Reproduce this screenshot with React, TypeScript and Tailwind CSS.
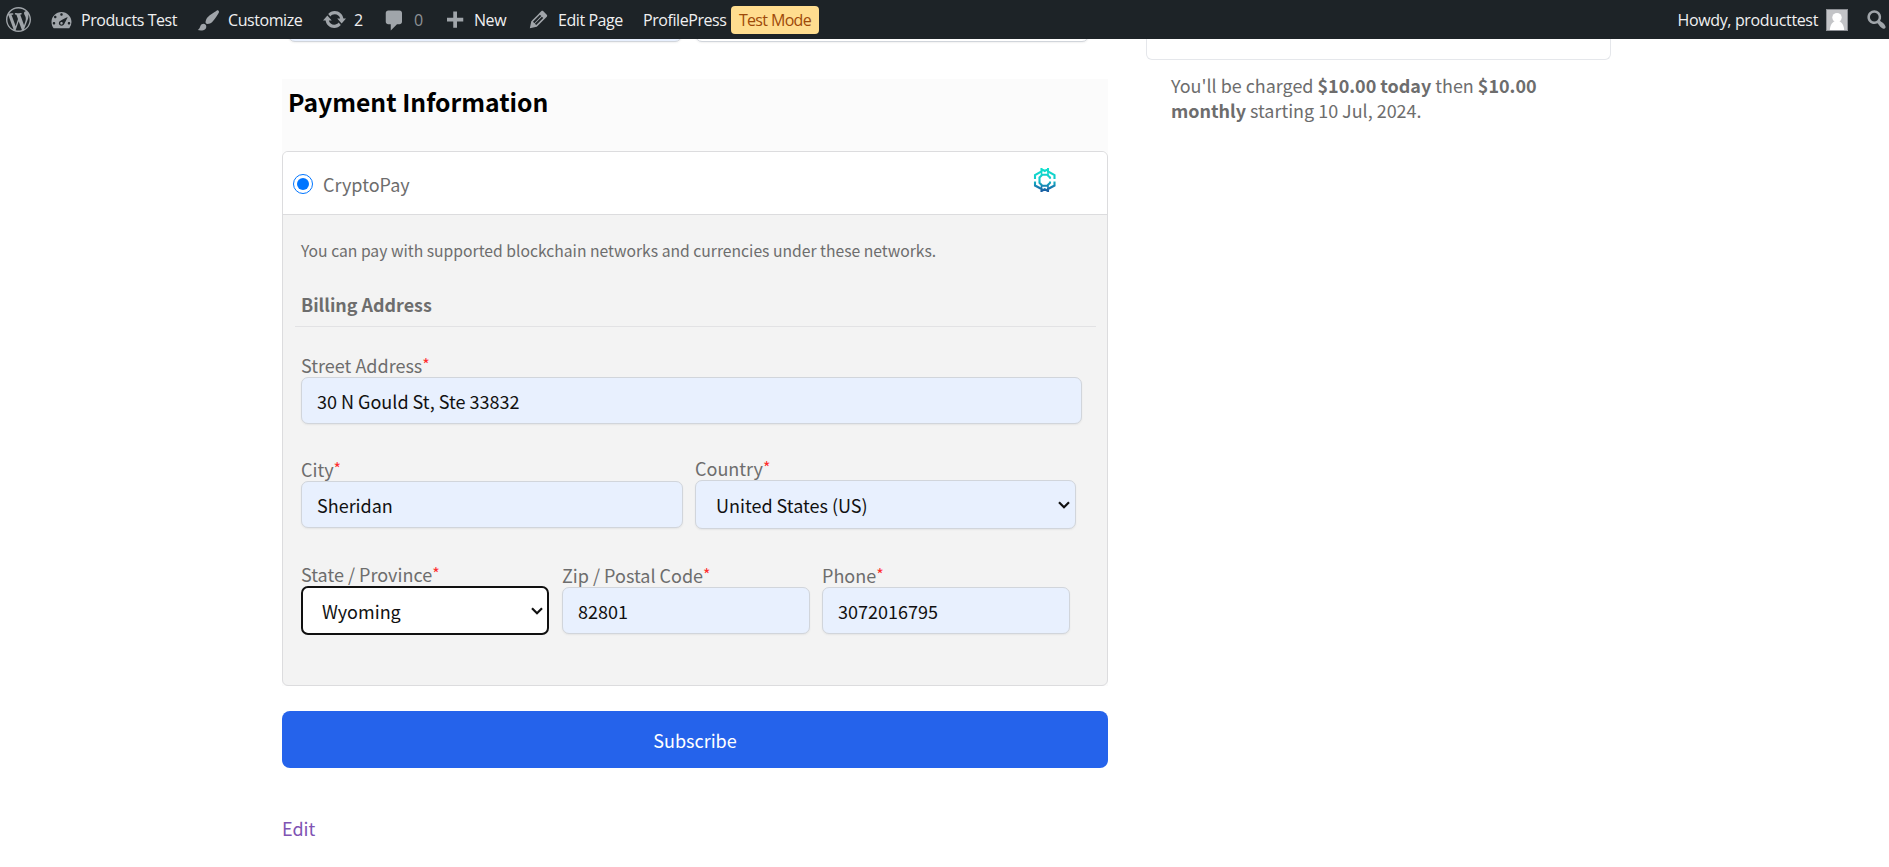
import React from "react";

const icons = {
  wordpress:
    "M20 10c0-5.51-4.49-10-10-10C4.48 0 0 4.49 0 10c0 5.52 4.48 10 10 10 5.51 0 10-4.48 10-10zM7.78 15.37L4.37 6.22c.55-.02 1.17-.08 1.17-.08.5-.06.44-1.13-.06-1.11 0 0-1.45.11-2.37.11-.18 0-.37 0-.58-.01C4.12 2.69 6.87 1.11 10 1.11c2.33 0 4.45.87 6.05 2.34-.68-.11-1.65.39-1.65 1.58 0 .74.45 1.36.9 2.1.35.61.55 1.36.55 2.46 0 1.49-1.4 5-1.4 5l-3.03-8.37c.54-.02.82-.17.82-.17.5-.05.44-1.25-.06-1.22 0 0-1.44.12-2.38.12-.87 0-2.33-.12-2.33-.12-.5-.03-.56 1.2-.06 1.22l.92.08 1.26 3.41zM17.41 10c.24-.64.74-1.87.43-4.25.7 1.29 1.05 2.71 1.05 4.25 0 3.29-1.73 6.24-4.4 7.78.97-2.59 1.94-5.2 2.92-7.78zM6.1 18.09C3.12 16.65 1.11 13.53 1.11 10c0-1.3.23-2.48.72-3.59C3.25 10.3 4.67 14.2 6.1 18.09zm4.03-6.63l2.58 6.98c-.86.29-1.76.45-2.71.45-.79 0-1.57-.11-2.29-.33.81-2.38 1.62-4.74 2.42-7.1z",
  dashboard:
    "M3.76 17h12.48A7.98 7.98 0 0 0 18 12c0-4.41-3.58-8-8-8s-8 3.59-8 8c0 1.9.66 3.64 1.76 5zM9 6c0-.55.45-1 1-1s1 .45 1 1c0 .56-.45 1-1 1s-1-.44-1-1zM4 8c0-.55.45-1 1-1s1 .45 1 1c0 .56-.45 1-1 1s-1-.44-1-1zm4.52 3.4c.84-.83 6.51-3.5 6.51-3.5s-2.66 5.68-3.49 6.51c-.84.84-2.18.84-3.02 0-.83-.83-.83-2.18 0-3.01zM3 13c0-.55.45-1 1-1s1 .45 1 1c0 .56-.45 1-1 1s-1-.44-1-1zm6 0c0 .55.45 1 1 1 .55 0 1-.45 1-1 0-.56-.45-1-1-1-.55 0-1 .44-1 1zm6 0c0-.55.45-1 1-1s1 .45 1 1c0 .56-.45 1-1 1s-1-.44-1-1z",
  brush:
    "M18.33 3.57s.27-.8-.31-1.36c-.53-.52-1.22-.24-1.22-.24-.61.3-5.76 3.47-7.67 5.57-.86.96-2.06 3.79-1.09 4.82.92.98 3.96-.17 4.79-1 2.06-2.06 5.21-7.17 5.5-7.79zM1.4 17.65c2.37-1.56 1.46-3.41 3.23-4.64.93-.65 2.22-.62 3.08.29.63.67.8 2.57-.16 3.46-1.57 1.45-4 1.55-6.15.89z",
  update:
    "M10.2 3.28c3.53 0 6.43 2.61 6.92 6h2.08l-3.5 4-3.5-4h2.32c-.45-1.97-2.21-3.45-4.32-3.45-1.45 0-2.73.71-3.54 1.78L4.95 5.66C6.23 4.2 8.11 3.28 10.2 3.28zm-.4 13.44c-3.52 0-6.43-2.61-6.92-6H.8l3.5-4c1.17 1.33 2.33 2.67 3.5 4H5.48c.45 1.97 2.21 3.45 4.32 3.45 1.45 0 2.73-.71 3.54-1.78l1.71 1.95c-1.28 1.46-3.15 2.38-5.25 2.38z",
  comment:
    "M5 2h9c1.1 0 2 .9 2 2v7c0 1.1-.9 2-2 2h-2l-5 5v-5H5c-1.1 0-2-.9-2-2V4c0-1.1.9-2 2-2z",
  plus: "M17 7v3h-5v5H9v-5H4V7h5V2h3v5h5z",
  pencil:
    "M13.89 3.39l2.71 2.72c.46.46.42 1.24.03 1.64l-8.01 8.02-5.56 1.16 1.16-5.58s7.6-7.63 7.99-8.03c.39-.39 1.22-.39 1.68.07zm-2.73 2.79l-5.59 5.61 1.11 1.11 5.54-5.65zm-2.97 8.23l5.58-5.6-1.07-1.08-5.59 5.6z",
  search:
    "M12.14 4.18c1.87 1.87 2.11 4.75.72 6.89.12.1.22.21.36.31.2.16.47.36.81.59.34.24.56.39.66.47.42.31.73.57.94.78.32.32.6.65.84 1 .25.35.44.69.59 1.04.14.35.21.68.18 1-.02.32-.14.59-.36.81s-.49.34-.81.36c-.31.02-.65-.04-.99-.19-.35-.14-.7-.34-1.04-.59-.35-.24-.68-.52-1-.84-.21-.21-.47-.52-.77-.93-.1-.13-.25-.35-.47-.66-.22-.32-.4-.57-.56-.78-.16-.2-.29-.35-.44-.5-2.07 1.09-4.69.76-6.44-.98-2.14-2.15-2.14-5.64 0-7.78 2.15-2.15 5.63-2.15 7.78 0zm-1.41 6.36c1.36-1.37 1.36-3.58 0-4.95-1.37-1.37-3.59-1.37-4.95 0-1.37 1.37-1.37 3.58 0 4.95 1.36 1.37 3.58 1.37 4.95 0z",
};

function Icon({ name, className = "" }: { name: keyof typeof icons; className?: string }) {
  return (
    <svg viewBox="0 0 20 20" className={`size-[25px] shrink-0 fill-[#a0a5aa] ${className}`}>
      <path fillRule="evenodd" d={icons[name]} />
    </svg>
  );
}

function AdminBar() {
  return (
    <header className="flex h-[39px] items-center overflow-hidden bg-[#1d2327] font-['Open_Sans',sans-serif] text-[16px] leading-[39px] tracking-[-0.43px] whitespace-nowrap text-[#f0f0f1]">
      <a className="flex w-[49px] items-center pl-[6px]">
        <Icon name="wordpress" />
      </a>
      <a className="flex w-[147px] items-center gap-[7px]">
        <Icon name="dashboard" className="-mt-px" />
        <span className="pt-px">Products Test</span>
      </a>
      <a className="flex w-[126px] items-center gap-[7px]">
        <Icon name="brush" className="mt-px" />
        <span className="pt-px">Customize</span>
      </a>
      <a className="flex w-[60px] items-center gap-[7px]">
        <Icon name="update" />
        <span className="pt-px">2</span>
      </a>
      <a className="flex w-[60px] items-center gap-[7px]">
        <Icon name="comment" className="mt-px" />
        <span className="pt-px text-[#8d9195]">0</span>
      </a>
      <a className="flex w-[84px] items-center gap-[7px]">
        <Icon name="plus" className="mt-[3px]" />
        <span className="pt-px">New</span>
      </a>
      <a className="flex w-[117px] items-center gap-[7px]">
        <Icon name="pencil" />
        <span className="pt-px">Edit Page</span>
      </a>
      <a className="flex items-center">
        <span className="w-[88px] pt-px">ProfilePress</span>
        <span className="flex h-7 w-[88px] items-center justify-center rounded-[4px] bg-[#ffdd8f] pt-px tracking-[-0.65px] text-[#9e4a09]">
          Test Mode
        </span>
      </a>
      <a className="ml-auto flex items-center gap-2">
        <span className="pt-px tracking-[-0.35px]">Howdy, producttest</span>
        <svg viewBox="0 0 22 22" className="size-[22px]">
          <rect width="22" height="22" fill="#8c8f94" />
          <rect x="1" y="1" width="20" height="20" fill="#c3c4c7" />
          <circle cx="11" cy="8.6" r="4.7" fill="#fff" />
          <path d="M3.8 21c.3-5 2.6-8.300 5.200-8.800h4c2.600.5 4.900 3.800 5.200 8.800z" fill="#fff" />
        </svg>
      </a>
      <Icon name="search" className="ml-[16px]" />
    </header>
  );
}

function CryptoLogo() {
  return (
    <svg viewBox="0 0 24 26" className="h-[26px] w-[24px]" fill="none" strokeWidth="2.1">
      <defs>
        <linearGradient id="crypto" x1="0" y1="0" x2="0" y2="26" gradientUnits="userSpaceOnUse">
          <stop offset="0" stopColor="#0fe3cb" />
          <stop offset="0.5" stopColor="#12c8cc" />
          <stop offset="0.72" stopColor="#1688b4" />
          <stop offset="1" stopColor="#1a4f9c" />
        </linearGradient>
      </defs>
      <g stroke="url(#crypto)">
        <path d="M2 12V8L8.500 4.300V1M21.500 12V8L15 4.300V1M8.500 2.200L11.750 4 15 2.200" />
        <path d="M2 14.500v4L8.500 22v3M21.500 14.500v4L15 22v3M8.500 24L11.750 22.300 15 24" />
        <path d="M17 11.800V10.500L14.200 7.700H9.300L6.500 10.500v5.300L9.300 18.700h4.900L17 15.800v-1.200" />
        <path d="M8.500 4.500v3.500M15 4.500v3.500M8.500 18.500v3.500M15 18.500v3.500" strokeWidth="1.600" />
      </g>
    </svg>
  );
}

function Label({ children }: { children: React.ReactNode }) {
  return (
    <label className="block h-[24px] text-[18px] leading-[24px] whitespace-nowrap text-[#6d6d6d]">
      {children}
      <span className="relative -top-[2px] text-[16px] leading-none text-[#ff2d2d]">*</span>
    </label>
  );
}

function TextField({ label, value, className }: { label: string; value: string; className: string }) {
  return (
    <div className={className}>
      <Label>{label}</Label>
      <div className="flex h-[47px] items-center rounded-[7px] border border-[#d1d5db] bg-[#e8f0fe] px-[15px] text-[18px] leading-none text-[#111] shadow-[0_1px_2px_rgba(0,0,0,0.06)]">
        {value}
      </div>
    </div>
  );
}

function SelectField({
  label,
  value,
  className,
  box,
}: {
  label: string;
  value: string;
  className: string;
  box: string;
}) {
  return (
    <div className={className}>
      <Label>{label}</Label>
      <div
        className={`flex h-[49px] items-center justify-between rounded-[7px] text-[18px] leading-none text-[#111] ${box}`}
      >
        {value}
        <svg viewBox="0 0 12 8" className="h-2 w-3" fill="none" stroke="#111" strokeWidth="2.2">
          <path d="M1 1.200l5 5 5-5" />
        </svg>
      </div>
    </div>
  );
}

export default function App() {
  return (
    <div className="h-[867px] overflow-hidden bg-white font-['Noto_Sans_CJK_SC',sans-serif] text-[18px] text-[#6d6d6d]">
      <AdminBar />
      <div className="flex items-start pl-[282px]">
        <main className="w-[826px]">
          <div className="flex h-[5px] items-end gap-[13px] overflow-hidden pb-[2px] pl-[6px] [clip-path:inset(0)]">
            <div className="h-[20px] w-[394px] shrink-0 rounded-[7px] border border-[#d1d5db] bg-[#e8f0fe] shadow-[0_1px_2px_rgba(0,0,0,0.06)]" />
            <div className="h-[20px] w-[394px] shrink-0 rounded-[7px] border border-[#d1d5db] bg-white shadow-[0_1px_2px_rgba(0,0,0,0.06)]" />
          </div>
          <section className="mt-[35px] bg-[#fbfbfb]">
            <h2 className="h-[72px] pl-[6px] text-[24.7px] leading-[44px] font-bold text-black">
              Payment Information
            </h2>
            <div className="h-[535px] rounded-[6px] border border-[#dcdcde] bg-[#f3f3f3]">
              <div className="flex h-[63px] items-center rounded-t-[5px] border-b border-[#dcdcde] bg-white pr-[50px] pl-[10px]">
                <span className="mt-[2px] flex size-5 items-center justify-center rounded-full border-[1.5px] border-[#0075ff]">
                  <span className="size-3 rounded-full bg-[#0075ff]" />
                </span>
                <span className="mt-0.5 ml-[10px] leading-none">CryptoPay</span>
                <span className="-mt-[7px] ml-auto">
                  <CryptoLogo />
                </span>
              </div>
              <p className="pt-[24px] pl-[18px] text-[15.7px] leading-[24px]">
                You can pay with supported blockchain networks and currencies under these networks.
              </p>
              <h3 className="mr-[11px] ml-[12px] h-[64px] border-b border-[#e2e2e4] pt-[28px] pl-[6px] text-[17.9px] leading-[26px] font-bold">
                Billing Address
              </h3>
              <div className="mt-[26px] pl-[18px]">
                <TextField label="Street Address" value="30 N Gould St, Ste 33832" className="w-[781px]" />
                <div className="mt-[32px] flex gap-3">
                  <TextField label="City" value="Sheridan" className="w-[382px] pt-px" />
                  <SelectField
                    label="Country"
                    value="United States (US)"
                    className="w-[381px]"
                    box="border border-[#d1d5db] bg-[#e8f0fe] pr-[5px] pl-5 shadow-[0_1px_2px_rgba(0,0,0,0.06)]"
                  />
                </div>
                <div className="mt-[33px] flex">
                  <SelectField
                    label="State / Province"
                    value="Wyoming"
                    className="mr-[13px] w-[248px]"
                    box="border-2 border-[#101010] bg-white pr-1 pl-[19px]"
                  />
                  <TextField label="Zip / Postal Code" value="82801" className="mr-3 w-[248px] pt-px" />
                  <TextField label="Phone" value="3072016795" className="w-[248px] pt-px" />
                </div>
              </div>
            </div>
          </section>
          <button className="mt-[25px] flex h-[57px] w-full items-center justify-center rounded-[8px] bg-[#2563eb] text-[18px] leading-none text-white">
            Subscribe
          </button>
          <a className="mt-[47px] block text-[18px] leading-[26px] text-[#7f54b3]">Edit</a>
        </main>
        <aside className="ml-[38px] w-[465px]">
          <div className="h-[21px] rounded-b-[6px] border border-t-0 border-[#e5e7eb]" />
          <p className="pt-[13px] pl-[25px] text-[17.95px] leading-[25px] whitespace-nowrap">
            You'll be charged <b>$10.00 today</b> then <b>$10.00</b>
            <br />
            <b>monthly</b> starting 10 Jul, 2024.
          </p>
        </aside>
      </div>
    </div>
  );
}
